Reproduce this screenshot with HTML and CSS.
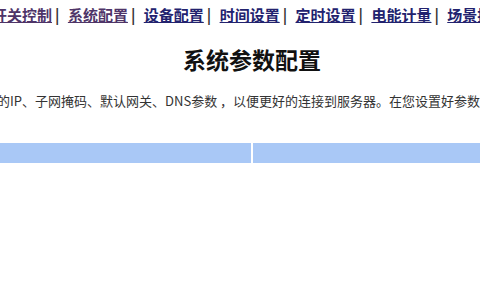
FILE: index.html
```html
<!DOCTYPE html>
<html lang="zh-CN">
<head>
<meta charset="UTF-8">
<title>系统参数配置</title>
<link rel="stylesheet" href="styles.css">
</head>
<body>
<div class="page">
  <div class="nav">
    <a href="#" class="visited">开关控制</a><span class="sep">|</span>
    <a href="#" class="visited">系统配置</a><span class="sep">|</span>
    <a href="#">设备配置</a><span class="sep">|</span>
    <a href="#">时间设置</a><span class="sep">|</span>
    <a href="#">定时设置</a><span class="sep">|</span>
    <a href="#">电能计量</a><span class="sep">|</span>
    <a href="#">场景控制</a>
  </div>

  <h2 class="title">系统参数配置</h2>

  <p class="desc">请在此页面配置设备的IP、子网掩码、默认网关、DNS参数 ，以便更好的连接到服务器。在您设置好参数后，请点击保存按钮。</p>

  <table class="params">
    <tr>
      <th></th>
      <th></th>
    </tr>
  </table>
</div>
</body>
</html>
```

FILE: styles.css
```css
body {
  margin: 0;
  padding: 0;
  background-color: #fff;
  font-family: "Noto Sans CJK SC", "Liberation Sans", sans-serif;
  overflow: hidden;
}
.page {
  width: 560px;
  margin-left: -28px;
}
.nav {
  white-space: nowrap;
  padding: 5px 0 0 20px;
  font-size: 15px;
  line-height: 20px;
  font-weight: bold;
}
.nav a {
  color: #22226e;
  text-decoration: underline;
}
.nav a.visited {
  color: #4e3468;
}
.nav .sep {
  color: #333;
  margin: 0 5px 0 3px;
}
.title {
  text-align: center;
  font-size: 23px;
  font-weight: bold;
  color: #111;
  margin: 18px 0 0 0;
  line-height: 32px;
}
.desc {
  white-space: nowrap;
  font-size: 13px;
  color: #333;
  margin: 18px 0 0 -92px;
  line-height: 16px;
}
.params {
  width: 100%;
  border-collapse: separate;
  border-spacing: 2px 0;
  margin-top: 34px;
}
.params th {
  background-color: #a9c8f6;
  height: 20px;
  padding: 0;
}
```
